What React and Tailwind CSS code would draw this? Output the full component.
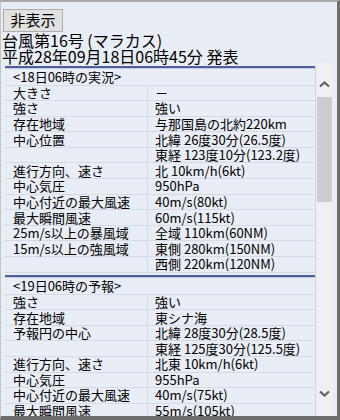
import React from "react"

const now = [
  ["大きさ", "－"],
  ["強さ", "強い"],
  ["存在地域", "与那国島の北約220km"],
  ["中心位置", "北緯 26度30分(26.5度)"],
  ["", "東経 123度10分(123.2度)"],
  ["進行方向、速さ", "北 10km/h(6kt)"],
  ["中心気圧", "950hPa"],
  ["中心付近の最大風速", "40m/s(80kt)"],
  ["最大瞬間風速", "60m/s(115kt)"],
  ["25m/s以上の暴風域", "全域 110km(60NM)"],
  ["15m/s以上の強風域", "東側 280km(150NM)"],
  ["", "西側 220km(120NM)"],
]

const forecast = [
  ["強さ", "強い"],
  ["存在地域", "東シナ海"],
  ["予報円の中心", "北緯 28度30分(28.5度)"],
  ["", "東経 125度30分(125.5度)"],
  ["進行方向、速さ", "北東 10km/h(6kt)"],
  ["中心気圧", "955hPa"],
  ["中心付近の最大風速", "40m/s(75kt)"],
  ["最大瞬間風速", "55m/s(105kt)"],
]

const Section = ({ title, rows }) => (
  <div className="pb-[2px]">
    <div className="border-t-2 border-[#4d5f9e] border-b border-b-[#c3cbe0]" />
    <div className="h-[17px] flex items-center pl-2 border-b border-[#d5dbe5]">{title}</div>
    {rows.map((r, i) => (
      <div key={i} className="flex h-[15.6px] border-b border-[#d5dbe5]">
        <div className="w-[143px] shrink-0 pl-2 flex items-center border-r border-[#d5dbe5]">{r[0]}</div>
        <div className="pl-[7px] flex items-center whitespace-nowrap">{r[1]}</div>
      </div>
    ))}
  </div>
)

const Chevron = ({ down }) => (
  <svg width="11" height="7" viewBox="0 0 11 7">
    <polyline
      points={down ? "1,1.5 5.5,5.5 10,1.5" : "1,5.5 5.5,1.5 10,5.5"}
      fill="none"
      stroke="#5f5f5f"
      strokeWidth="2.2"
    />
  </svg>
)

export default function App() {
  return (
    <div
      className="w-[340px] h-[420px] bg-[#e9edf5] border-t-2 border-t-[#a8a8a8] border-l border-l-[#c4c4c4] border-r-[3px] border-r-[#6d6d6d] border-b-4 border-b-[#6d6d6d] flex flex-col overflow-hidden text-black"
      style={{ fontFamily: '"Noto Sans CJK JP", "Noto Sans", sans-serif' }}
    >
      <div className="pt-[5px] pl-[2px]">
        <button className="w-[60px] h-[23px] bg-[#e1e1e1] border border-[#adadad] text-[15px] leading-[20px]">
          非表示
        </button>
      </div>
      <div className="pl-[1px] text-[16px] leading-[16px]">
        <div className="h-[16px]">台風第16号 (マラカス)</div>
        <div className="h-[16px]">平成28年09月18日06時45分 発表</div>
      </div>
      <div className="flex-1 min-h-0 flex ml-[2px] w-[330px] mt-[-1px]">
        <div className="flex-1 min-w-0 overflow-hidden pl-[2px] pt-[3px] text-[13px] leading-[14px]">
          <div className="border-r border-[#cfd5df] h-full">
            <Section title="<18日06時の実況>" rows={now} />
            <Section title="<19日06時の予報>" rows={forecast} />
          </div>
        </div>
        <div className="w-[17px] shrink-0 bg-[#f0f0f0] flex flex-col items-center">
          <div className="h-[13px]" />
          <div className="h-[17px] flex items-center justify-center">
            <Chevron />
          </div>
          <div className="h-[4px]" />
          <div className="w-[15px] h-[105px] bg-[#cdcdcd]" />
          <div className="flex-1" />
          <div className="h-[17px] flex items-center justify-center">
            <Chevron down />
          </div>
          <div className="h-[14px]" />
        </div>
      </div>
    </div>
  )
}
